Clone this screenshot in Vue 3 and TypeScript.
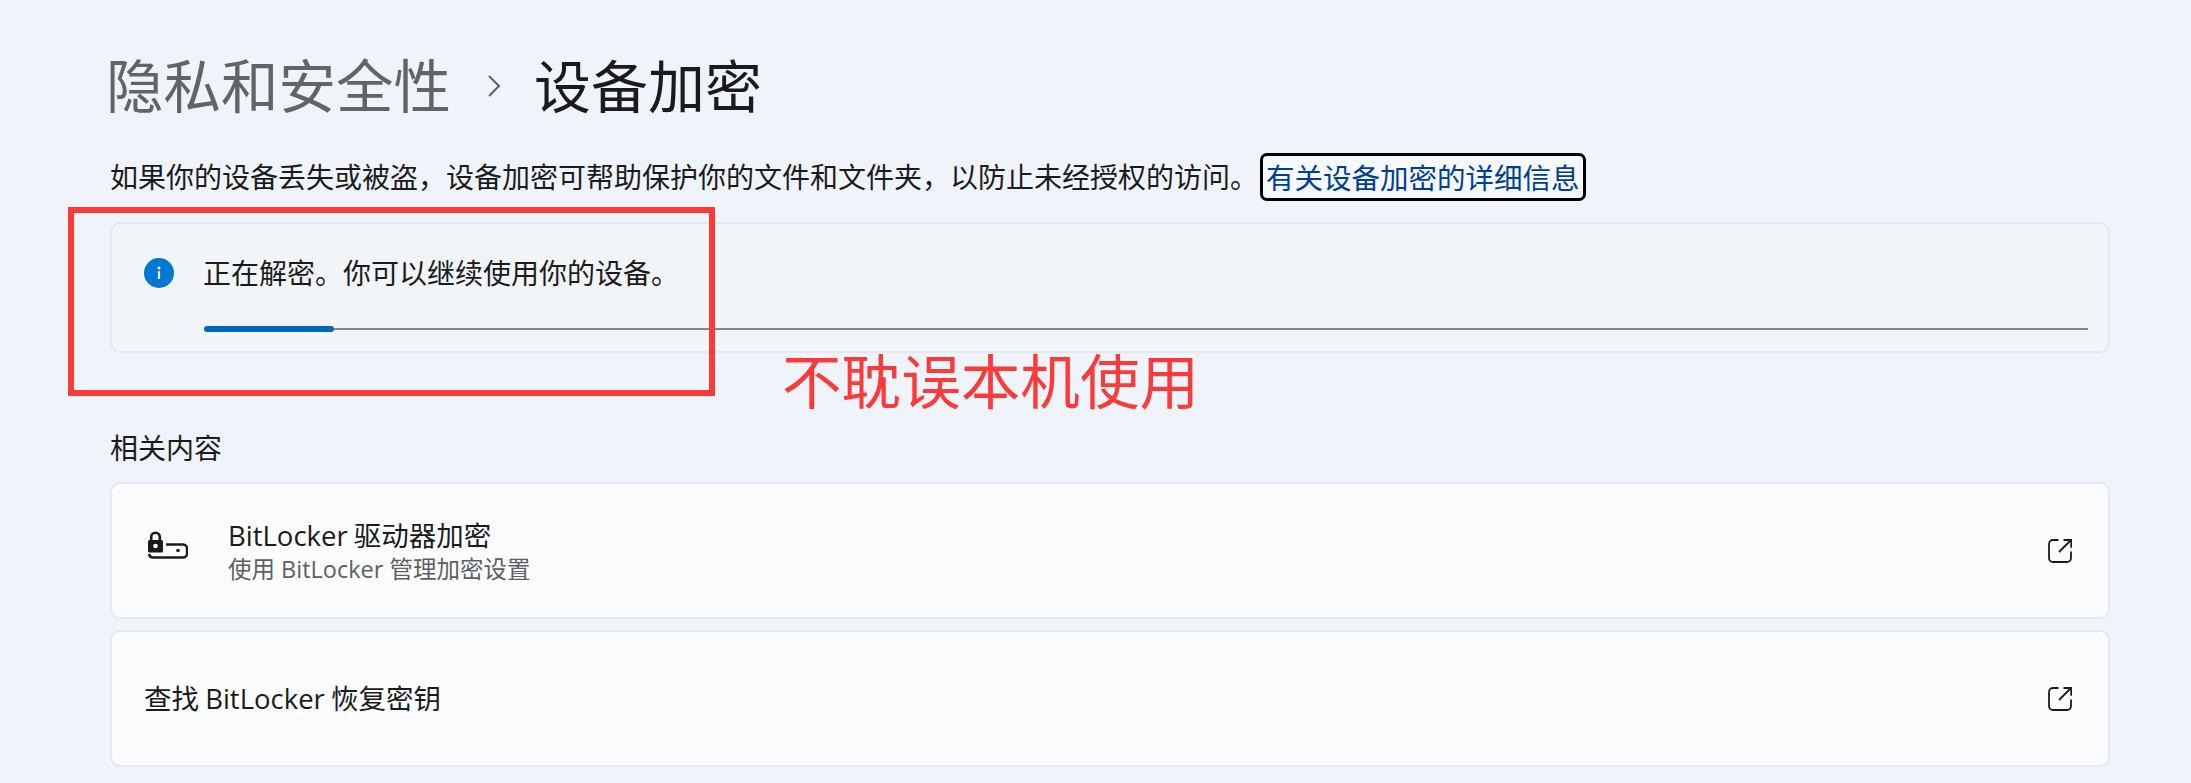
<script setup lang="ts">
interface RelatedItem {
  title: string
  sub?: string
  lock?: boolean
}

const related: RelatedItem[] = [
  { title: 'BitLocker 驱动器加密', sub: '使用 BitLocker 管理加密设置', lock: true },
  { title: '查找 BitLocker 恢复密钥' }
]

const progress = 6.9
</script>

<template>
  <div class="page">
    <header class="crumb">
      <span class="crumb-parent">隐私和安全性</span>
      <svg class="crumb-sep" width="14" height="24" viewBox="0 0 14 24">
        <path d="M2 2 L12 12 L2 22" fill="none" stroke="#606060" stroke-width="2" />
      </svg>
      <span class="crumb-current">设备加密</span>
    </header>

    <p class="desc">
      <span>如果你的设备丢失或被盗，设备加密可帮助保护你的文件和文件夹，以防止未经授权的访问。</span>
      <a class="link">有关设备加密的详细信息</a>
    </p>

    <section class="notice">
      <div class="notice-row">
        <svg class="info" width="30" height="30" viewBox="0 0 30 30">
          <circle cx="15" cy="15" r="15" fill="#0078d4" />
          <rect x="13.9" y="13.2" width="2.2" height="7.8" fill="#fff" />
          <circle cx="15" cy="10" r="1.5" fill="#fff" />
        </svg>
        <span class="notice-text">正在解密。你可以继续使用你的设备。</span>
      </div>
      <div class="track">
        <div class="fill" :style="{ width: progress + '%' }"></div>
      </div>
    </section>

    <h2 class="heading">相关内容</h2>

    <div class="list">
      <div v-for="item in related" :key="item.title" class="row">
        <svg v-if="item.lock" class="lock" width="40" height="28" viewBox="0 0 40 28">
          <rect x="0" y="9" width="15" height="12.5" rx="1.5" fill="#1b1b1b" />
          <path d="M3.2 10V6a4.3 4.3 0 0 1 8.6 0v4" fill="none" stroke="#1b1b1b" stroke-width="2.6" />
          <circle cx="7.500" cy="15" r="2.3" fill="#fff" />
          <path d="M18 13.5H35a4 4 0 0 1 4 4v5a4 4 0 0 1-4 4H5a4 4 0 0 1-4-3.5" fill="none" stroke="#1b1b1b" stroke-width="2.4" />
          <circle cx="30" cy="19.5" r="1.8" fill="#1b1b1b" />
        </svg>
        <div class="row-text">
          <div class="row-title">{{ item.title }}</div>
          <div v-if="item.sub" class="row-sub">{{ item.sub }}</div>
        </div>
        <svg class="ext" width="24" height="24" viewBox="0 0 24 24">
          <path d="M10.5 1H5a4 4 0 0 0-4 4v14a4 4 0 0 0 4 4h14a4 4 0 0 0 4-4v-6.500" fill="none" stroke="#1b1b1b" stroke-width="1.800" />
          <path d="M15.500 1H23.200V8.700M23 1L11 13" fill="none" stroke="#1b1b1b" stroke-width="1.800" />
        </svg>
      </div>
    </div>

    <div class="mark-box"></div>
    <div class="mark-text">不耽误本机使用</div>
  </div>
</template>

<style>
html,
body {
  margin: 0;
  background: #eff4fb;
}
</style>

<style scoped>
.page {
  position: relative;
  box-sizing: border-box;
  width: 2191px;
  height: 783px;
  overflow: hidden;
  padding: 0 81px 0 110px;
  background: #eff4fb;
  color: #1b1b1b;
  font-family: "Open Sans", "Noto Sans CJK SC", sans-serif;
  font-size: 28px;
}

.crumb {
  display: flex;
  align-items: center;
  height: 60px;
  padding-top: 56px;
  margin-left: -4px;
  font-size: 57.5px;
  line-height: 60px;
  font-weight: 400;
}

.crumb-parent {
  color: #626466;
}

.crumb-sep {
  margin: 0 33px 0 36px;
}

.crumb-current {
  font-size: 57px;
}

.desc {
  display: flex;
  align-items: center;
  height: 48px;
  margin: 37px 0 0;
  line-height: 38px;
}

.link {
  box-sizing: border-box;
  height: 48px;
  margin-left: 2px;
  padding: 0 3px;
  border: 3px solid #000;
  border-radius: 7px;
  background: #f5f8fd;
  color: #003e92;
  font-size: 28.5px;
  line-height: 44px;
  white-space: nowrap;
}

.notice {
  box-sizing: border-box;
  height: 131px;
  margin-top: 21px;
  padding: 28px 20px 0 32px;
  border: 2px solid #e5e8ec;
  border-radius: 10px;
  background: #f2f5f8;
}

.notice-row {
  display: flex;
  align-items: center;
  gap: 29px;
  height: 42px;
}

.notice-text {
  margin-bottom: 3px;
}

.track {
  position: relative;
  height: 2px;
  margin: 34px 0 0 60px;
  background: #868686;
}

.fill {
  position: absolute;
  top: -2px;
  left: 0;
  height: 6px;
  border-radius: 3px;
  background: #0067c0;
}

.heading {
  margin: 76px 0 0;
  height: 38px;
  font-size: 28px;
  line-height: 38px;
  font-weight: 400;
}

.list {
  display: flex;
  flex-direction: column;
  gap: 11px;
  margin-top: 15px;
}

.row {
  box-sizing: border-box;
  display: flex;
  align-items: center;
  height: 137px;
  padding: 0 36px 0 32px;
  border: 2px solid #e6eaf0;
  border-radius: 10px;
  background: #fbfcfe;
}

.lock {
  margin: -12px 40px 0 4px;
}

.ext {
  margin-top: 1px;
}

.row-text {
  flex: 1;
}

.row-title {
  font-size: 27.5px;
  line-height: 38px;
  word-spacing: -1px;
}

.row-sub {
  margin-top: -2px;
  font-size: 23.5px;
  line-height: 32px;
  color: #5f5f5f;
}

.mark-box {
  position: absolute;
  left: 68px;
  top: 207px;
  box-sizing: border-box;
  width: 647px;
  height: 189px;
  border: 6px solid #fd3a3a;
}

.mark-text {
  position: absolute;
  left: 782px;
  top: 338px;
  font-size: 59.6px;
  line-height: 86px;
  color: #fd3a3a;
  white-space: nowrap;
}
</style>
